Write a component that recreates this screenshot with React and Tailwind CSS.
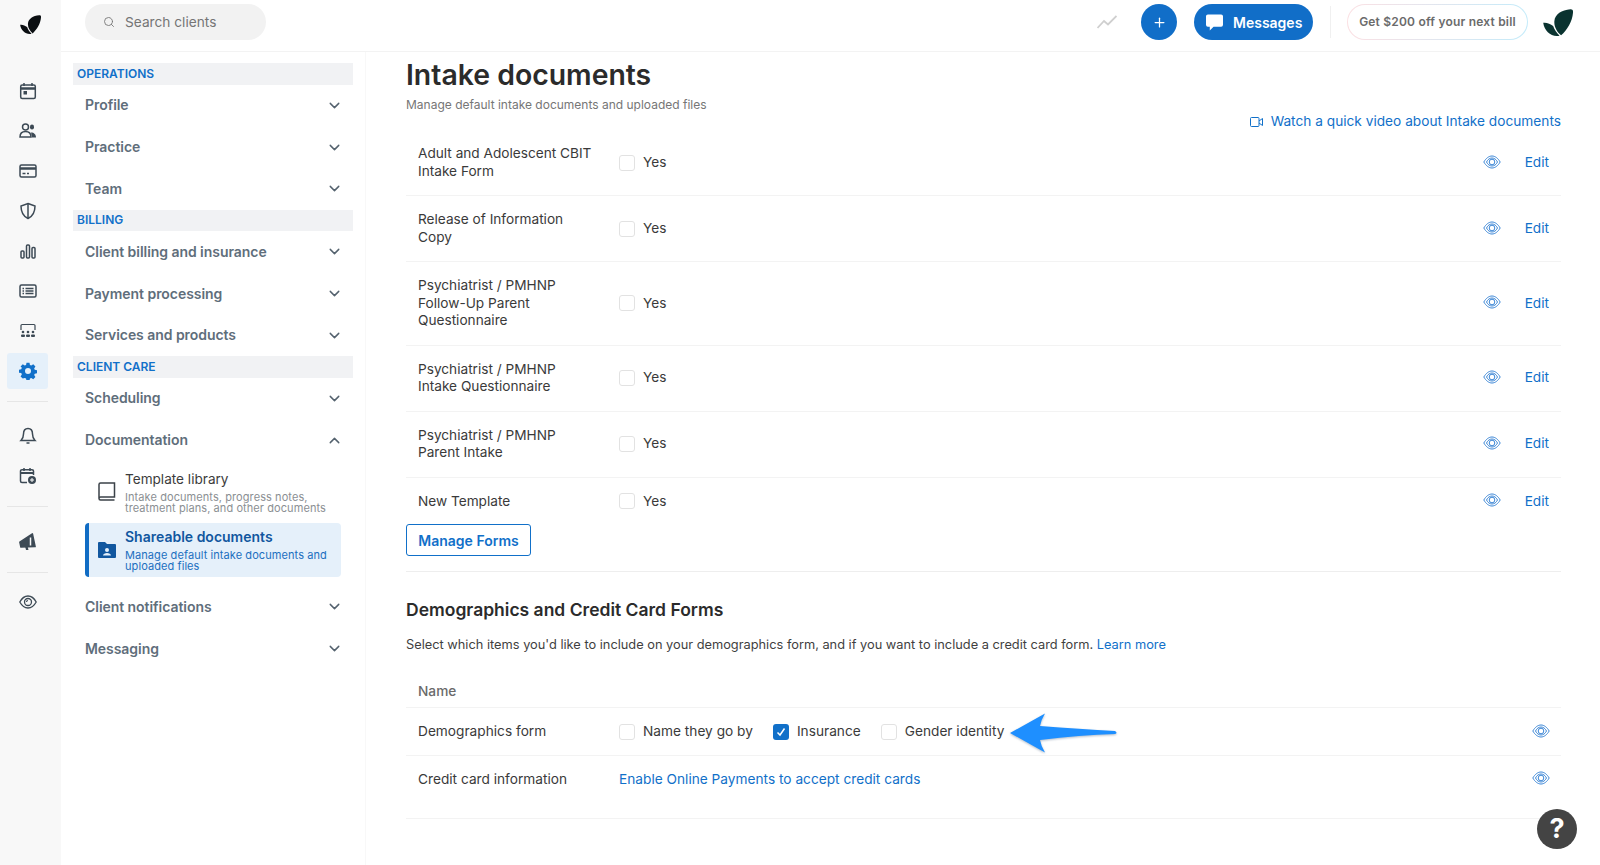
import React from "react";
import { ChevronDown, ChevronUp, Search, Plus } from "lucide-react";

const Leaf = ({ className }) => (
  <svg viewBox="0 0 29 26" className={className} fill="currentColor">
    <path d="M26.500.2C28.500 0 29.300 1.500 29 3.500 28.300 12 23.500 20 17.500 25.400 13.500 22 10.500 17 11 11.500 11.600 5 18 .9 26.500.2Z" />
    <path d="M.2 13.300C3.500 12.800 7 14.200 9.800 16.500c1.300 3.700 3.500 6.700 6.200 9.200C8.500 27.500 1.300 21.500.2 13.300Z" />
  </svg>
);

const Eye = ({ className = "w-[18px] h-[14px] text-[#3b86d6]" }) => (
  <svg viewBox="0 0 18 14" className={className} fill="none" stroke="currentColor" strokeWidth="1">
    <path d="M.8 7C3 3.300 5.800 1 9 1s6 2.300 8.200 6C15 10.700 12.200 13 9 13S3 10.700.8 7Z" />
    <path d="M3.500 7C4.800 4.500 6.700 3 9 3s4.200 1.500 5.500 4C13.200 9.500 11.300 11 9 11S4.800 9.500 3.500 7Z" />
    <circle cx="9" cy="7" r="2.800" />
  </svg>
);

const Box = ({ checked, className = "" }) =>
  checked ? (
    <span className={`w-4 h-4 rounded-[3px] bg-[#1170c9] flex items-center justify-center shrink-0 ${className}`}>
      <svg viewBox="0 0 16 16" className="w-4 h-4" fill="none" stroke="#fff" strokeWidth="1.500">
        <path d="M4.500 8.500 7 11l4.500-6.500" />
      </svg>
    </span>
  ) : (
    <span className={`w-4 h-4 rounded-[3px] border border-[#e2e2e2] bg-white shrink-0 ${className}`} />
  );

const RI = ({ children }) => (
  <div className="h-10 w-[55px] flex items-center justify-center text-[#3d4a55]">
    <svg viewBox="0 0 18 18" className="w-[18px] h-[18px]" fill="none" stroke="currentColor" strokeWidth="1.500">
      {children}
    </svg>
  </div>
);

const Divider = () => <div className="ml-[7px] w-[41px] mt-[10px] mb-[14px] border-t border-[#e6e6e6]" />;

function Rail() {
  return (
    <div className="w-[61px] shrink-0 bg-[#f8f8f8] flex flex-col">
      <div className="h-[71px] w-[60px] pt-[15px] flex justify-center">
        <Leaf className="w-[21px] h-[19px] text-[#0b0f12]" />
      </div>
      <RI>
        <rect x="1.700" y="3" width="14.600" height="13.500" rx="1.500" />
        <path d="M1.700 6.500h14.600" strokeWidth="2.500" />
        <path d="M5 1v3M13 1v3" />
        <rect x="4.500" y="9" width="3.500" height="3.500" fill="currentColor" stroke="none" />
      </RI>
      <RI>
        <circle cx="6.500" cy="5" r="3" />
        <path d="M1 15c0-3.500 2-5.500 5.500-5.500S12 11 12 15Z" />
        <rect x="11" y="2.500" width="4" height="5" rx="2" fill="currentColor" stroke="none" />
        <path d="M12 10.500c3 0 5 2 5 5h-4Z" fill="currentColor" stroke="none" />
      </RI>
      <RI>
        <rect x="1" y="3" width="16" height="12" rx="1.500" />
        <path d="M1 6.500h16" strokeWidth="2.500" />
        <path d="M3.500 11.500h3M8 11.500h2" />
      </RI>
      <RI>
        <path d="M9 1.500 16 4c0 6-1.500 10-7 12.500C3.500 14 2 10 2 4Z" />
        <path d="M9 1.500v15" />
      </RI>
      <RI>
        <rect x="2" y="9" width="3" height="7" rx="1" />
        <rect x="7.500" y="3" width="3" height="13" rx="1" />
        <rect x="13" y="5.500" width="3" height="10.500" rx="1" />
      </RI>
      <RI>
        <rect x="1" y="3" width="16" height="12" rx="1.500" />
        <path d="M3.500 6.500h1.500M6.500 6.500h8M3.500 9h1.500M6.500 9h8M3.500 11.500h1.500M6.500 11.500h8" />
      </RI>
      <RI>
        <path d="M2 8V3.500C2 3 2.500 2.500 3 2.500h12c.5 0 1 .5 1 1V8" strokeWidth="1.200" />
        <g fill="currentColor" stroke="none">
          <circle cx="4" cy="10" r="1.300" />
          <circle cx="9" cy="10" r="1.300" />
          <circle cx="14" cy="10" r="1.300" />
          <rect x="2" y="12.500" width="4" height="2.500" rx="1" />
          <rect x="7" y="12.500" width="4" height="2.500" rx="1" />
          <rect x="12" y="12.500" width="4" height="2.500" rx="1" />
        </g>
      </RI>
      <div className="h-10 w-[55px] flex items-center justify-center">
        <div className="w-[41px] h-9 rounded-[3px] bg-[#e5f0fa] flex items-center justify-center">
          <svg viewBox="0 0 24 24" className="w-[18px] h-[18px]" fill="#1170c9">
            <path
              fillRule="evenodd"
              d="M10 1h4l.6 3 1.800.8 2.600-1.700 2.900 2.900-1.700 2.600.8 1.800 3 .6v4l-3 .6-.8 1.800 1.700 2.600-2.900 2.900-2.600-1.700-1.800.8-.6 3h-4l-.6-3-1.800-.8L5 22.100l-2.900-2.900 1.700-2.600-.8-1.800-3-.6v-4l3-.6.8-1.800L2.100 6 5 3.100l2.600 1.700L9.400 4ZM12 8a4 4 0 1 0 0 8 4 4 0 0 0 0-8Z"
            />
          </svg>
        </div>
      </div>
      <Divider />
      <RI>
        <path d="M9 1.500c-3 0-4.500 2.500-4.500 5.500 0 3-1 5-2.500 6.500h14C14.500 12 13.500 10 13.500 7c0-3-1.500-5.500-4.500-5.500Z" />
        <path d="M7.500 16h3" />
      </RI>
      <RI>
        <path d="M8 15.500H3c-1 0-1.500-.5-1.500-1.500V4c0-.7.5-1.200 1.500-1.200h10c1 0 1.500.5 1.500 1.200v4" />
        <path d="M1.500 6h13" strokeWidth="2" />
        <path d="M5 1v3M11 1v3" />
        <circle cx="13" cy="13" r="4" fill="currentColor" stroke="none" />
        <path d="M13 11v4M11 13h4" stroke="#fff" strokeWidth="1" />
      </RI>
      <Divider />
      <div className="mt-px">
        <RI>
          <path d="M1 7.500 15 2v13L1 12.500Z" fill="currentColor" strokeLinejoin="round" transform="rotate(-12 9 9)" />
          <path d="M6 13l1 4h2.500L8.500 13Z" fill="currentColor" stroke="none" />
          <path d="M11.500 4.500v8" stroke="#f8f8f8" strokeWidth="1.500" />
        </RI>
      </div>
      <Divider />
      <div className="-mt-[5px]">
        <RI>
          <path d="M.8 9C3 5 5.800 3 9 3s6 2 8.200 6C15 13 12.200 15 9 15S3 13 .8 9Z" strokeWidth="1.300" />
          <circle cx="9" cy="9" r="3.500" strokeWidth="1.300" />
          <path d="M9 7.500a1.500 1.500 0 0 0-1.500 1.500" strokeWidth="1.200" />
        </RI>
      </div>
    </div>
  );
}

function TopBar() {
  return (
    <div className="h-[52px] shrink-0 border-b border-[#f3f3f3] flex items-center pl-6 pr-[27px]">
      <div className="w-[181px] h-9 rounded-full bg-[#f2f2f2] flex items-center pl-[18px] mb-[7px] gap-[10px]">
        <Search className="w-[12px] h-[12px] text-[#777]" strokeWidth={1.800} />
        <span className="text-[13.7px] text-[#757575]">Search clients</span>
      </div>
      <div className="ml-auto flex items-center mb-[7px]">
        <svg viewBox="0 0 20 14" className="w-5 h-[14px] mr-[24px]" fill="none" stroke="#cfcfcf" strokeWidth="1.800">
          <path d="M.5 13 7 6l4 3.500L19.500 1" />
        </svg>
        <div className="w-9 h-9 rounded-full bg-[#116ec8] flex items-center justify-center mr-[17px]">
          <Plus className="w-[15px] h-[15px] text-white" strokeWidth={2} />
        </div>
        <div className="w-[119px] h-9 rounded-full bg-[#116ec8] flex items-center pl-[12px] gap-[10px] text-white text-[14px] font-semibold">
          <svg viewBox="0 0 18 17" className="w-[17px] h-[17px]" fill="#fff">
            <path d="M2 0h14a2 2 0 0 1 2 2v9a2 2 0 0 1-2 2H8l-4 4v-4H2a2 2 0 0 1-2-2V2a2 2 0 0 1 2-2Z" />
          </svg>
          Messages
        </div>
        <div className="w-px h-8 bg-[#f0f0f0] ml-[17px] mr-4" />
        <div className="w-[181px] h-9 rounded-full p-px bg-linear-to-r from-[#fbe0e3] to-[#c3ebfa]">
          <div className="w-full h-full rounded-full bg-white flex items-center justify-center text-[12px] font-semibold text-[#6b6b6b] tracking-[0.2px]">
            Get $200 off your next bill
          </div>
        </div>
        <Leaf className="w-[30px] h-[27px] text-[#0a3330] ml-[15px]" />
      </div>
    </div>
  );
}

const Head = ({ children }) => (
  <div className="h-[21.5px] bg-[#f1f2f4] pl-1 flex items-center text-[12px] font-semibold text-[#1170c9] uppercase">
    {children}
  </div>
);

const Item = ({ children, open }) => (
  <div className="h-[41.7px] flex items-center pl-3 pr-[10px] text-[14px] font-semibold text-[#5f6e7b] tracking-[-0.05px]">
    <span className="flex-1 pb-px">{children}</span>
    {open ? (
      <ChevronUp className="w-[17px] h-[17px] text-[#54626e]" strokeWidth={2} />
    ) : (
      <ChevronDown className="w-[17px] h-[17px] text-[#54626e]" strokeWidth={2} />
    )}
  </div>
);

function Sidebar() {
  return (
    <div className="w-[305px] shrink-0 pl-3 pt-[11px] border-r border-[#f8f8f8]">
      <div className="w-[280px]">
        <Head>Operations</Head>
        <Item>Profile</Item>
        <Item>Practice</Item>
        <Item>Team</Item>
        <Head>Billing</Head>
        <Item>Client billing and insurance</Item>
        <Item>Payment processing</Item>
        <Item>Services and products</Item>
        <Head>Client care</Head>
        <Item>Scheduling</Item>
        <Item open>Documentation</Item>
        <div className="ml-3 w-[256px] mt-1 h-[54px] flex items-center pl-[13px] gap-2">
          <svg viewBox="0 0 18 20" className="w-[18px] h-5 shrink-0 text-[#3b4248]" fill="none" stroke="currentColor" strokeWidth="1.500">
            <path d="M1 16.500V2.500C1 1.500 1.700 1 2.500 1H16.500V15H2.500C1.700 15 1 15.500 1 16.500S1.700 18 2.500 18H16.500" />
          </svg>
          <div className="pl-px">
            <div className="text-[13.6px] leading-[18px] text-[#3c3c3c]">Template library</div>
            <div className="text-[11px] leading-[11px] mt-[3.500px] text-[#8b8f93] tracking-[0.08px]">
              Intake documents, progress notes, treatment plans, and other documents
            </div>
          </div>
        </div>
        <div className="ml-3 w-[256px] mt-1 h-[54px] flex items-center bg-[#e5f0fa] border-l-4 border-[#116cc4] rounded-[4px] pl-[9px] gap-[9px]">
          <svg viewBox="0 0 18 16" className="w-[18px] h-4 shrink-0" fill="#11579f">
            <path
              fillRule="evenodd"
              d="M1 0h6l2 2h8a1 1 0 0 1 1 1v12a1 1 0 0 1-1 1H1a1 1 0 0 1-1-1V1a1 1 0 0 1 1-1Zm8 6a2 2 0 1 0 0 4 2 2 0 0 0 0-4Zm-4 7.500h8c0-1.500-2-2.500-4-2.500s-4 1-4 2.500Z"
            />
          </svg>
          <div>
            <div className="text-[14px] leading-[18px] font-semibold text-[#11579f]">Shareable documents</div>
            <div className="text-[11px] leading-[11px] mt-[3.500px] text-[#1c6fc0] tracking-[0.08px]">
              Manage default intake documents and uploaded files
            </div>
          </div>
        </div>
        <div className="mt-[9px]">
          <Item>Client notifications</Item>
          <Item>Messaging</Item>
        </div>
      </div>
    </div>
  );
}

const docs = [
  "Adult and Adolescent CBIT Intake Form",
  "Release of Information Copy",
  "Psychiatrist / PMHNP Follow-Up Parent Questionnaire",
  "Psychiatrist / PMHNP Intake Questionnaire",
  "Psychiatrist / PMHNP Parent Intake",
  "New Template",
];

function Main() {
  return (
    <div className="flex-1 pl-10 pr-[39px] pt-[5px] min-w-0">
      <h1 className="text-[28.4px] leading-[36px] font-semibold text-[#2b2b2b]">Intake documents</h1>
      <p className="text-[12px] leading-4 mt-[3.500px] text-[#767676]">Manage default intake documents and uploaded files</p>
      <div className="mt-px h-[16.500px] flex items-center justify-end gap-2 text-[13.7px] text-[#1170c9]">
        <svg viewBox="0 0 13 10" className="w-[13px] h-[10px]" fill="none" stroke="currentColor" strokeWidth="1">
          <rect x=".5" y=".5" width="8.500" height="9" rx="1" />
          <path d="M9 4l3.500-2.500v7L9 6" />
        </svg>
        <span>Watch a quick video about Intake documents</span>
      </div>
      {docs.map((d, i) => (
        <div
          key={d}
          className={`flex items-center pt-[15px] text-[13.65px] leading-[17.5px] text-[#3a3a3a] ${
            i < docs.length - 1 ? "pb-[15px] border-b border-[#f3f3f3]" : "pb-[14px]"
          }`}
        >
          <div className="w-[213px] pl-3 pr-[25px] shrink-0">{d}</div>
          <Box />
          <span className="ml-2">Yes</span>
          <span className="ml-auto mr-[24px] flex -mt-[2px]">
            <Eye />
          </span>
          <span className="text-[#1170c9] mr-3">Edit</span>
        </div>
      ))}
      <button className="block w-[125px] h-8 rounded-[3px] border border-[#1170c9] text-[14px] font-semibold text-[#1170c9] bg-white">
        Manage Forms
      </button>
      <div className="mt-[15px] border-t border-[#eeeeee]" />
      <h2 className="mt-[26px] text-[17.5px] leading-6 font-semibold text-[#2b2b2b]">Demographics and Credit Card Forms</h2>
      <p className="mt-[14px] text-[12.8px] leading-[18px] text-[#3f3f3f]">
        Select which items you'd like to include on your demographics form, and if you want to include a credit card
        form. <span className="text-[#1170c9]">Learn more</span>
      </p>
      <div className="mt-7 pl-3 pb-[7px] text-[13.7px] leading-[18px] font-medium text-[#6a6a6a] border-b border-[#f3f3f3]">
        Name
      </div>
      <div className="relative h-[48px] flex items-center text-[13.7px] text-[#3a3a3a] border-b border-[#f3f3f3]">
        <div className="w-[213px] pl-3 shrink-0">Demographics form</div>
        <Box />
        <span className="ml-2">Name they go by</span>
        <Box checked className="ml-5" />
        <span className="ml-2">Insurance</span>
        <Box className="ml-5" />
        <span className="ml-2">Gender identity</span>
        <svg
          viewBox="0 0 108 40"
          className="absolute left-[604px] top-[5px] w-[108px] h-[40px]"
          style={{ filter: "drop-shadow(0 1px 1px rgba(30,60,100,.35))" }}
        >
          <path d="M0 20 35 .5 Q31 7 30 13 Q70 16 105 18 Q108 20 105 21 Q70 22 30 27 Q31 33 35 39.500Z" fill="#1e8fff" />
        </svg>
        <span className="ml-auto mr-[11px] flex -mt-[2px]">
          <Eye />
        </span>
      </div>
      <div className="h-[63px] pt-[14px] flex items-start text-[13.7px] leading-[18px] text-[#3a3a3a] border-b border-[#f3f3f3]">
        <div className="w-[213px] pl-3 shrink-0">Credit card information</div>
        <span className="text-[#1170c9]">Enable Online Payments to accept credit cards</span>
        <span className="ml-auto mr-[11px] flex pt-[1px]">
          <Eye />
        </span>
      </div>
    </div>
  );
}

export default function App() {
  return (
    <div className="relative h-[865px] w-full flex overflow-hidden bg-white font-['Inter',sans-serif]">
      <Rail />
      <div className="flex-1 flex flex-col min-w-0">
        <TopBar />
        <div className="flex flex-1">
          <Sidebar />
          <Main />
        </div>
      </div>
      <div className="absolute left-[1537px] top-[809px] w-10 h-10 rounded-full bg-[#444444] flex items-center justify-center text-white text-[27px] font-bold">
        ?
      </div>
    </div>
  );
}
